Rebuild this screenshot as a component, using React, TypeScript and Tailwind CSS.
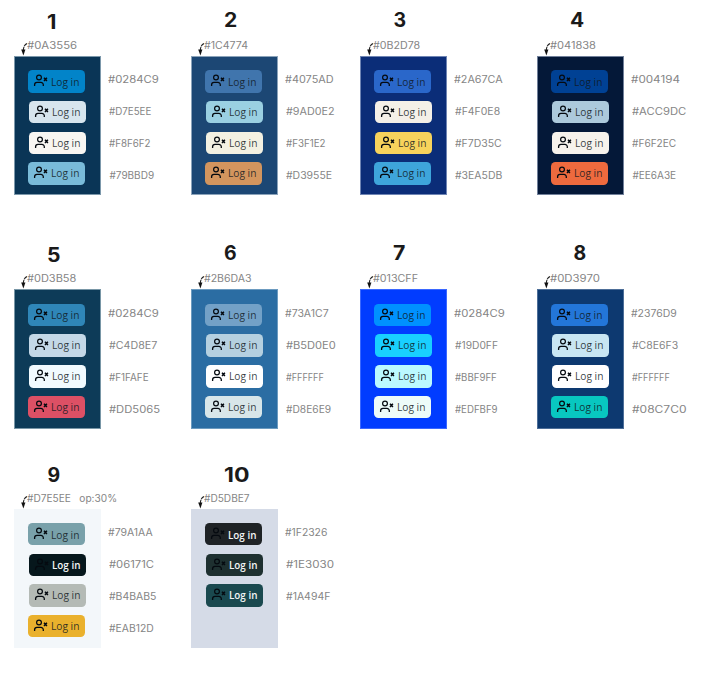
import { useLayoutEffect, useRef } from "react";

type Swatch = { hex: string; w: number; color?: string; dark?: boolean };
type Palette = {
  id: string;
  idWidth: number;
  heading: string;
  label: string;
  labelWidth: number;
  bg: string;
  border: string;
  swatches: Swatch[];
};

// Stretches a line of text horizontally to an exact width.
function FitText({ text, width, className }: { text: string; width: number; className: string }) {
  const ref = useRef<HTMLSpanElement>(null);
  useLayoutEffect(() => {
    const el = ref.current;
    if (el) el.style.transform = `scaleX(${width / el.offsetWidth})`;
  }, [text, width]);
  return (
    <span className="block shrink-0" style={{ width }}>
      <span ref={ref} className={`block w-max origin-left whitespace-pre ${className}`}>
        {text}
      </span>
    </span>
  );
}

function UserIcon() {
  return (
    <svg className="h-[22px] w-[20px] shrink-0" viewBox="0 0 20 22" fill="none" stroke="#050a10">
      <circle cx="11" cy="7.5" r="2.4" strokeWidth="1.2" />
      <path d="M6.6 16v-1.2a2.4 2.4 0 0 1 2.4-2.4h3.9a2.4 2.4 0 0 1 2.4 2.4v1.2" strokeWidth="1.3" />
      <path d="m16 7.8 2.9 3.2m0-3.2-2.9 3.2" strokeWidth="1.5" />
    </svg>
  );
}

function Arrow() {
  return (
    <svg className="h-[14px] w-[8px] shrink-0" viewBox="0 0 8 14" fill="none">
      <path d="M6 1.6Q3 2.4 2.3 8" stroke="#222" strokeWidth="1.1" strokeDasharray="4 .8" />
      <path d="M.2 7.4h4.2L2.4 13.4Z" fill="#111" />
    </svg>
  );
}

const insets = ["ml-[14px]", "ml-[15px]", "ml-[15px]", "ml-[14px]"];
const textDrops = ["pt-[0.6px]", "pt-0", "pt-0", "pt-0"];

function LoginButton({ swatch, index }: { swatch: Swatch; index: number }) {
  return (
    <div
      className={`flex h-[22.4px] w-[57.3px] rounded-[4.5px] ${insets[index]}`}
      style={{ backgroundColor: swatch.color ?? swatch.hex }}
    >
      <UserIcon />
      <div className={`ml-[3.4px] ${textDrops[index]}`}>
        <FitText
          text="Log in"
          width={28.3}
          className={`font-["Open_Sans",sans-serif] text-[10.8px] leading-[22px] ${
            swatch.dark ? "font-semibold text-[#f3f6f6]" : "font-normal text-[#101820]/85"
          }`}
        />
      </div>
    </div>
  );
}

function PaletteView({ p }: { p: Palette }) {
  return (
    <section className="flex flex-col">
      <div className={`h-[38px] shrink-0 ${p.heading}`}>
        <FitText text={p.id} width={p.idWidth} className="font-[Inter,sans-serif] text-[19.5px] font-bold leading-[24px] text-[#1a1a1a]" />
      </div>
      <div className="flex h-[18px] shrink-0 pl-[6.5px]">
        <div className="pt-[4px]">
          <Arrow />
        </div>
        <div className="-ml-[2px]">
          <FitText text={p.label} width={p.labelWidth} className="font-[Inter,sans-serif] text-[10px] leading-[14px] text-[#858585]" />
        </div>
      </div>
      <div className="flex">
        <div
          className="flex h-[139.3px] w-[87.3px] shrink-0 flex-col gap-[8.3px] border pt-[13.4px]"
          style={{ backgroundColor: p.bg, borderColor: p.border }}
        >
          {p.swatches.map((s, i) => (
            <div key={i} className="-ml-px h-[22.4px]">
              <LoginButton swatch={s} index={i} />
            </div>
          ))}
        </div>
        <div className="flex flex-col gap-[18px] pt-[16.2px]">
          {p.swatches.map((s, i) => (
            <div key={i} className={i === 0 ? "pl-[6.7px]" : "pl-[8.2px]"}>
              <FitText text={s.hex} width={s.w} className="font-[Inter,sans-serif] text-[10px] leading-[14px] text-[#858585]" />
            </div>
          ))}
        </div>
      </div>
    </section>
  );
}

const palettes: Palette[] = [
  {
    id: "1", idWidth: 9, heading: "pt-[10px] pl-[33px]", label: "#0A3556", labelWidth: 50, bg: "#0A3556", border: "#7c98ab",
    swatches: [{ hex: "#0284C9", w: 51 }, { hex: "#D7E5EE", w: 42 }, { hex: "#F8F6F2", w: 42 }, { hex: "#79BBD9", w: 45 }],
  },
  {
    id: "2", idWidth: 13, heading: "pt-[8px] pl-[33px]", label: "#1C4774", labelWidth: 44.5, bg: "#1C4774", border: "#8ba3ba",
    swatches: [{ hex: "#4075AD", w: 49 }, { hex: "#9AD0E2", w: 48.5 }, { hex: "#F3F1E2", w: 40 }, { hex: "#D3955E", w: 46 }],
  },
  {
    id: "3", idWidth: 13, heading: "pt-[8px] pl-[33.5px]", label: "#0B2D78", labelWidth: 47, bg: "#0B2D78", border: "#6f85b4",
    swatches: [{ hex: "#2A67CA", w: 48.5 }, { hex: "#F4F0E8", w: 45 }, { hex: "#F7D35C", w: 47 }, { hex: "#3EA5DB", w: 47 }],
  },
  {
    id: "4", idWidth: 14, heading: "pt-[8px] pl-[33px]", label: "#041838", labelWidth: 46.5, bg: "#041838", border: "#71809a",
    swatches: [{ hex: "#004194", w: 49 }, { hex: "#ACC9DC", w: 54 }, { hex: "#F6F2EC", w: 44.5 }, { hex: "#EE6A3E", w: 44 }],
  },
  {
    id: "5", idWidth: 13, heading: "pt-[9.7px] pl-[33px]", label: "#0D3B58", labelWidth: 49.5, bg: "#0D3B58", border: "#7896a6",
    swatches: [{ hex: "#0284C9", w: 51, color: "#2f86b8" }, { hex: "#C4D8E7", w: 48 }, { hex: "#F1FAFE", w: 39.5 }, { hex: "#DD5065", w: 50.5 }],
  },
  {
    id: "6", idWidth: 13, heading: "pt-[7.9px] pl-[33px]", label: "#2B6DA3", labelWidth: 47.5, bg: "#2B6DA3", border: "#6c9bc0",
    swatches: [{ hex: "#73A1C7", w: 44 }, { hex: "#B5D0E0", w: 50 }, { hex: "#FFFFFF", w: 38 }, { hex: "#D8E6E9", w: 45 }],
  },
  {
    id: "7", idWidth: 12, heading: "pt-[7.9px] pl-[33px]", label: "#013CFF", labelWidth: 45, bg: "#013CFF", border: "#3b68ff",
    swatches: [{ hex: "#0284C9", w: 51, color: "#0091ff" }, { hex: "#19D0FF", w: 43 }, { hex: "#BBF9FF", w: 41.5 }, { hex: "#EDFBF9", w: 42.5 }],
  },
  {
    id: "8", idWidth: 13, heading: "pt-[7.9px] pl-[36.5px]", label: "#0D3970", labelWidth: 50, bg: "#0D3970", border: "#4d6e98",
    swatches: [{ hex: "#2376D9", w: 46 }, { hex: "#C8E6F3", w: 46 }, { hex: "#FFFFFF", w: 38 }, { hex: "#08C7C0", w: 54 }],
  },
  {
    id: "9", idWidth: 13, heading: "pt-[10.4px] pl-[33.5px]", label: "#D7E5EE   op:30%", labelWidth: 90, bg: "#f3f7fa", border: "#f3f7fa",
    swatches: [{ hex: "#79A1AA", w: 45 }, { hex: "#06171C", w: 45, dark: true }, { hex: "#B4BAB5", w: 47 }, { hex: "#EAB12D", w: 44.5 }],
  },
  {
    id: "10", idWidth: 26, heading: "pt-[10.4px] pl-[32.5px]", label: "#D5DBE7", labelWidth: 45.5, bg: "#D5DBE7", border: "#D5DBE7",
    swatches: [{ hex: "#1F2326", w: 42.5, dark: true }, { hex: "#1E3030", w: 47.5, dark: true }, { hex: "#1A494F", w: 44, dark: true }],
  },
];

export default function App() {
  return (
    <main className="h-[674px] w-[711px] overflow-hidden bg-white pl-[14px]">
      <div className="grid grid-cols-[177px_169px_177px_174px] grid-rows-[233.4px_219.2px_221px]">
        {palettes.map((p) => (
          <PaletteView key={p.id} p={p} />
        ))}
      </div>
    </main>
  );
}
